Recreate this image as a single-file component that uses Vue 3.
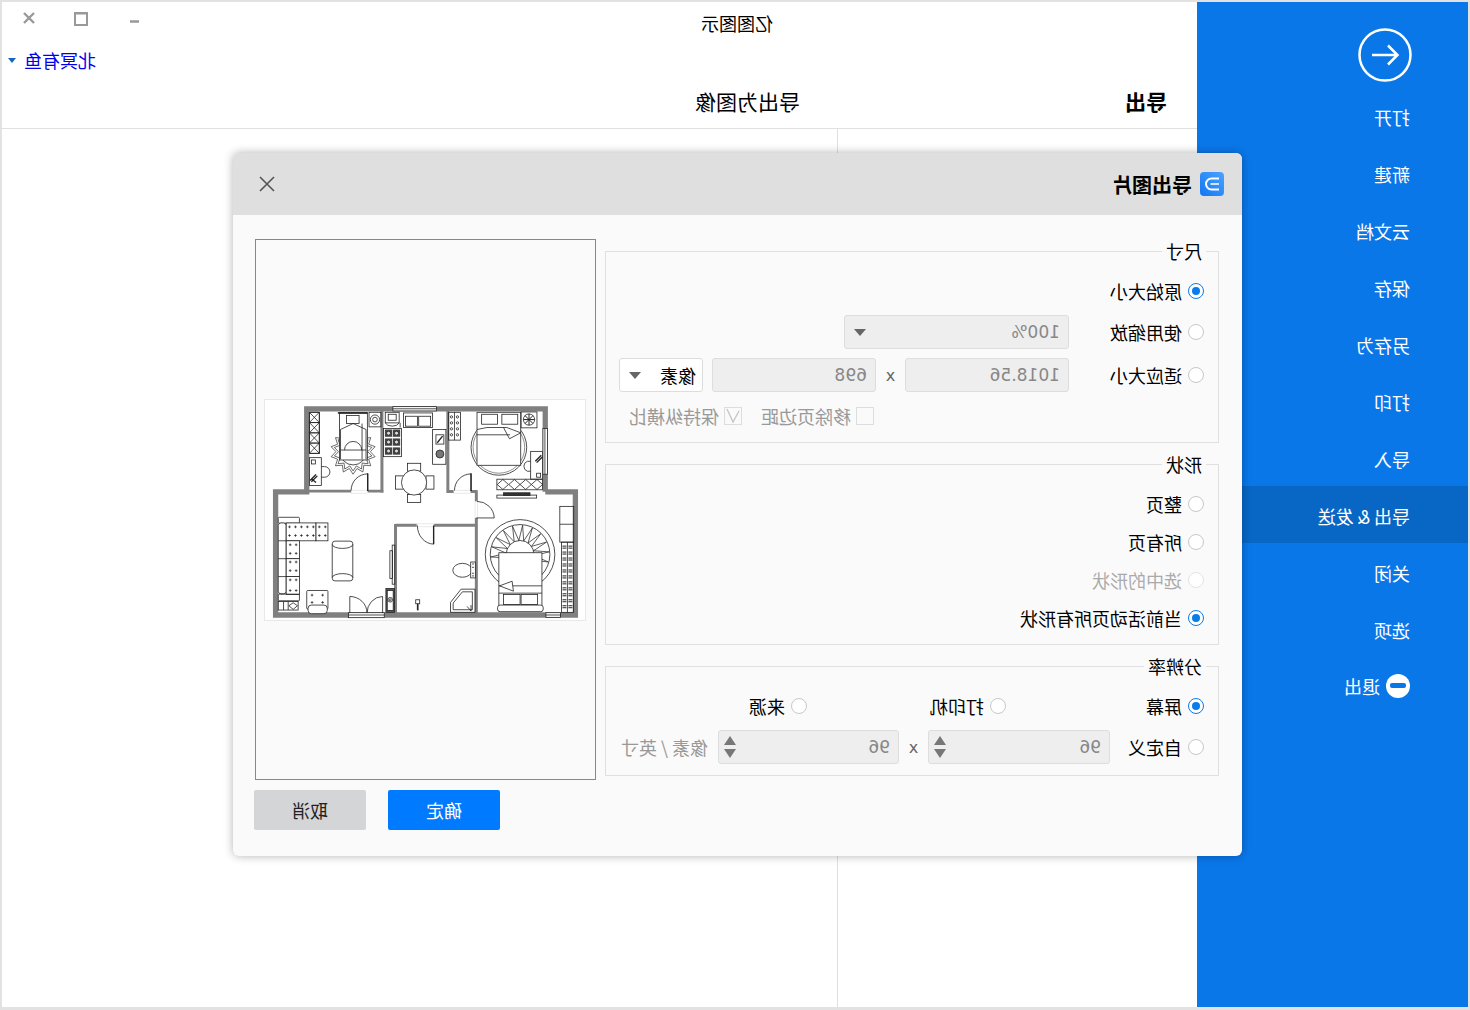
<script setup>
const menu = [
  { label: '打开' }, { label: '新建' }, { label: '云文档' }, { label: '保存' }, { label: '另存为' },
  { label: '打印' }, { label: '导入' }, { label: '导出 & 发送', active: true }, { label: '关闭' }, { label: '选项' },
]
function ring(cx, cy, r1, r2, n, from = 0, to = 360) {
  const pts = []
  for (let i = 0; i <= n * 2; i++) {
    const a = ((from + ((to - from) * i) / (n * 2)) * Math.PI) / 180
    const r = i % 2 ? r2 : r1
    pts.push(`${(cx + r * Math.cos(a)).toFixed(1)},${(cy + r * Math.sin(a)).toFixed(1)}`)
  }
  return pts.join(' ')
}
const rugA = ring(296, 185, 52, 68, 14)
const rugB = ring(296, 185, 44, 58, 14)
const fan = ring(800, 495, 42, 88, 11, 165, 385)
const xCells = [66, 97, 128, 159]
const plus = []
for (const y of [412, 438]) for (const x of [104, 122, 140, 158, 176, 194, 212]) plus.push([x, y])
for (const y of [466, 492, 518, 544, 572, 604]) for (const x of [106, 124]) plus.push([x, y])
for (const y of [618, 640]) for (const x of [172, 204]) plus.push([x, y])
const diamonds = [748, 783, 817, 851]
const burners = [130, 157, 184]
const shelfDots = [80, 98, 116, 134]
const bookRows = [470, 488, 506, 524, 542, 560, 578, 596, 614, 632, 650]
</script>

<template>
  <div class="page">
    <aside class="side">
      <svg class="back" viewBox="0 0 54 54" fill="none" stroke="#fff">
        <circle cx="27" cy="27" r="25.5" stroke-width="2.5" />
        <path d="M40 27H15M24 17.500L14.500 27L24 36.500" stroke-width="2.500" />
      </svg>
      <div v-for="m in menu" :key="m.label" class="item" :class="{ active: m.active }">{{ m.label }}</div>
      <div class="item quit">
        <span class="quit-ico"><i></i></span>
        <span>退出</span>
      </div>
    </aside>

    <main class="main">
      <div class="titlebar">
        <span class="app-title">亿图图示</span>
        <div class="winctl">
          <svg width="12" height="12" viewBox="0 0 12 12"><path d="M0 9.500H9" stroke="#999" stroke-width="2.500" /></svg>
          <svg width="14" height="14" viewBox="0 0 14 14" fill="none"><rect x="1" y="1" width="12" height="12" stroke="#999" stroke-width="2" /><path d="M0 1.500H14" stroke="#999" stroke-width="2" /></svg>
          <svg width="12" height="12" viewBox="0 0 12 12"><path d="M1 1L11 11M11 1L1 11" stroke="#999" stroke-width="2.400" /></svg>
        </div>
      </div>
      <div class="userbar">
        <span class="user">北冥有鱼</span>
        <span class="caret"></span>
      </div>
      <div class="tabs">
        <span class="tab-a">导出</span>
        <span class="tab-b">导出为图像</span>
      </div>
      <div class="panes">
        <div class="pane-l"></div>
        <div class="pane-r"></div>
      </div>
    </main>

    <section class="dialog">
      <header class="dlg-head">
        <svg class="logo flip" viewBox="0 0 24 24">
          <defs>
            <linearGradient id="lg" x1="1" y1="0" x2="0" y2="1">
              <stop offset="0" stop-color="#4aa3ff" />
              <stop offset="1" stop-color="#1277f2" />
            </linearGradient>
          </defs>
          <rect width="24" height="24" rx="4" fill="url(#lg)" />
          <path d="M19 6.500H11.500A5.500 5.500 0 0 0 11.500 17.500H19" fill="none" stroke="#fff" stroke-width="2" />
          <path d="M10.500 12H19" stroke="#cfe4ff" stroke-width="2" />
        </svg>
        <span class="dlg-title">导出图片</span>
        <svg class="dlg-close" width="16" height="16" viewBox="0 0 16 16"><path d="M1 1L15 15M15 1L1 15" stroke="#555" stroke-width="1.600" /></svg>
      </header>

      <div class="dlg-body">
        <div class="forms">
          <fieldset class="group g1">
            <legend>尺寸</legend>
            <div class="row r30"><label class="opt"><span class="radio on"></span>原始大小</label></div>
            <div class="row r34">
              <label class="opt w135"><span class="radio"></span>使用缩放</label>
              <div class="field w225 num">100%<span class="tri"></span></div>
            </div>
            <div class="row r34">
              <label class="opt w135"><span class="radio"></span>适应大小</label>
              <div class="field w164 num">1018.56</div>
              <span class="times">x</span>
              <div class="field w164 num">698</div>
              <div class="field unit">像素<span class="tri"></span></div>
            </div>
            <div class="row r30 checks">
              <span class="chk-wrap"><span class="chk"></span>移除页边距</span>
              <span class="chk-wrap"><span class="chk">
                <svg width="16" height="16" viewBox="0 0 16 16" fill="none"><path d="M2 3L8 14L14 1" stroke="#c4c4c4" stroke-width="1.300" /></svg>
              </span>保持纵横比</span>
            </div>
          </fieldset>

          <fieldset class="group g2">
            <legend>形状</legend>
            <div class="row r30"><label class="opt"><span class="radio"></span>整页</label></div>
            <div class="row r30"><label class="opt"><span class="radio"></span>所有页</label></div>
            <div class="row r30"><label class="opt off"><span class="radio dim"></span>选中的形状</label></div>
            <div class="row r30"><label class="opt"><span class="radio on"></span>当前活动页所有形状</label></div>
          </fieldset>

          <fieldset class="group g3">
            <legend>分辨率</legend>
            <div class="row r30">
              <label class="opt w198"><span class="radio on"></span>屏幕</label>
              <label class="opt w199"><span class="radio"></span>打印机</label>
              <label class="opt"><span class="radio"></span>来源</label>
            </div>
            <div class="row r34">
              <label class="opt w94"><span class="radio"></span>自定义</label>
              <div class="field w182 num">96<span class="spin"><b></b><u></u></span></div>
              <span class="times">x</span>
              <div class="field w181 num">96<span class="spin"><b></b><u></u></span></div>
              <span class="dpi">像素 / 英寸</span>
            </div>
          </fieldset>
        </div>

        <div class="preview">
          <div class="sheet">
            <svg class="plan flip" viewBox="30 30 966 662" fill="none" stroke="#222" stroke-width="2.400">
              <!-- walls -->
              <g stroke="#808080" stroke-width="16">
                <path d="M148 56H884M156 48V306M876 48V306M55 306H164M62 298V686M55 678H975M967 298V686M876 306H975" />
              </g>
              <g stroke="#808080" stroke-width="9">
                <path d="M383 56V309M156 304H290M340 304H388M582 56V310M578 305H600M650 305H672M668 305V335M668 385V678M424 407H488M540 407H668M424 403V678" />
              </g>
              <!-- openings -->
              <g fill="#fff">
                <rect x="416" y="49" width="132" height="13" /><path d="M416 55.500H548" />
                <rect x="282" y="671" width="108" height="15" /><path d="M282 678H390" />
                <rect x="878" y="671" width="44" height="14" /><path d="M878 678H922" />
                <rect x="290" y="301" width="50" height="9" stroke-width="1" stroke="#bbb" />
                <rect x="600" y="301" width="50" height="9" stroke-width="1" stroke="#bbb" />
                <rect x="664" y="335" width="8" height="50" stroke-width="1" stroke="#bbb" />
                <rect x="490" y="403" width="50" height="9" stroke-width="1" stroke="#bbb" />
              </g>

              <!-- doors -->
              <path d="M290 302A50 50 0 0 1 340 252V304" />
              <path d="M340 250V304" stroke-width="4" />
              <path d="M602 302A50 50 0 0 1 652 252V304" />
              <path d="M652 250V304" stroke-width="4" />
              <path d="M670 335A52 52 0 0 1 722 385H668" />
              <path d="M490 408A50 56 0 0 0 539 464V408" />
              <path d="M539 408V464" stroke-width="4" />
              <path d="M286 622V672M286 622A52 50 0 0 1 338 672A48 50 0 0 1 385 622V672" />

              <!-- upper-left bedroom -->
              <rect x="164" y="66" width="30" height="124" />
              <g v-for="y in xCells" :key="'x' + y">
                <path :d="`M164 ${y}H194V${y + 31}H164ZM164 ${y}L194 ${y + 31}M194 ${y}L164 ${y + 31}`" />
              </g>
              <polygon :points="rugA" stroke-width="2" />
              <polygon :points="rugB" stroke-width="2" />
              <circle cx="296" cy="185" r="40" />
              <rect x="255" y="68" width="84" height="142" fill="#fff" />
              <path d="M250 68H340" stroke-width="5" />
              <rect x="276" y="76" width="38" height="24" />
              <path d="M258 118L296 100L335 118V208M258 118V208M258 180H335M270 180A26 26 0 0 1 322 180M323 100V208" />
              <rect x="344" y="66" width="36" height="44" />
              <circle cx="362" cy="88" r="14" />
              <circle cx="362" cy="88" r="7" />
              <rect x="164" y="203" width="36" height="84" />
              <rect x="170" y="210" width="12" height="12" />
              <path d="M200 230H210A15 15 0 0 1 210 262H200" />
              <path d="M166 272L184 254M170 276L188 258M172 268L184 278" stroke-width="4" />

              <!-- kitchen -->
              <rect x="393" y="66" width="42" height="32" />
              <rect x="402" y="72" width="24" height="18" />
              <path d="M393 98A22 14 0 0 0 435 98M438 98V112" />
              <rect x="448" y="68" width="88" height="44" />
              <rect x="454" y="78" width="36" height="30" />
              <rect x="494" y="78" width="36" height="30" />
              <rect x="388" y="115" width="54" height="85" />
              <g v-for="y in burners" :key="'b' + y">
                <rect x="392" :y="y - 12" width="22" height="22" fill="#444" stroke="none" />
                <rect x="416" :y="y - 12" width="22" height="22" fill="#444" stroke="none" />
                <circle cx="403" :cy="y - 1" r="6" fill="#ddd" />
                <circle cx="427" :cy="y - 1" r="6" fill="#ddd" />
              </g>
              <rect x="536" y="118" width="40" height="105" />
              <rect x="546" y="134" width="24" height="28" />
              <path d="M550 158L566 138" stroke-width="4" />
              <circle cx="558" cy="192" r="12" fill="#777" />
              <rect x="460" y="220" width="40" height="24" />
              <rect x="460" y="314" width="40" height="24" />
              <rect x="424" y="258" width="24" height="40" />
              <rect x="516" y="258" width="24" height="40" />
              <circle cx="480" cy="278" r="38" fill="#fff" />

              <!-- upper-right bedroom -->
              <rect x="584" y="66" width="36" height="84" />
              <path d="M602 66V150" />
              <g v-for="y in shelfDots" :key="'s' + y">
                <circle cx="593" :cy="y" r="3.500" /><circle cx="611" :cy="y" r="3.500" />
              </g>
              <circle cx="736" cy="172" r="84" />
              <circle cx="736" cy="172" r="78" stroke-width="1.500" />
              <rect x="670" y="66" width="132" height="160" fill="#fff" />
              <rect x="684" y="72" width="48" height="30" />
              <rect x="745" y="72" width="48" height="30" />
              <path d="M670 118L700 112H760L802 128M670 134H770M750 112L768 146L802 128" />
              <rect x="803" y="65" width="48" height="48" />
              <circle cx="827" cy="88" r="17" />
              <path d="M810 88H844M827 71V105M815 76L839 100M839 76L815 100" stroke-width="3" />
              <rect x="869" y="115" width="14" height="138" fill="#fff" />
              <path d="M875 115V253" />
              <path d="M832 214H822A16 16 0 0 0 822 244H832" />
              <rect x="832" y="184" width="36" height="84" fill="#fff" />
              <rect x="850" y="250" width="12" height="12" />
              <path d="M846 214L864 196M850 218L868 200" stroke-width="4" />
              <rect x="730" y="268" width="138" height="32" />
              <g v-for="x in diamonds" :key="'d' + x">
                <path :d="`M${x} 269L${x + 17} 284L${x} 299L${x - 17} 284Z`" />
              </g>
              <rect x="730" y="316" width="120" height="9" />
              <rect x="750" y="309" width="80" height="8" fill="#333" />

              <!-- living room -->
              <rect x="70" y="383" width="64" height="18" rx="3" fill="#fff" />
              <rect x="70" y="400" width="24" height="214" rx="8" fill="#fff" />
              <rect x="94" y="400" width="90" height="54" fill="#fff" />
              <rect x="184" y="400" width="36" height="54" fill="#fff" />
              <rect x="94" y="454" width="40" height="54" fill="#fff" />
              <rect x="94" y="508" width="40" height="54" fill="#fff" />
              <rect x="94" y="562" width="40" height="54" fill="#fff" />
              <path d="M70 454H94M70 508H94M70 562H94" />
              <rect x="70" y="615" width="64" height="20" rx="2" />
              <rect x="70" y="637" width="60" height="26" />
              <path d="M86 637V663M100 637V663M102 650L115 641L128 650L115 661Z" />
              <rect x="156" y="604" width="64" height="56" rx="3" />
              <rect x="160" y="648" width="58" height="26" rx="10" fill="#fff" />
              <g v-for="(p, i) in plus" :key="'p' + i">
                <path :d="`M${p[0] - 4} ${p[1]}H${p[0] + 4}M${p[0]} ${p[1] - 4}V${p[1] + 4}`" stroke-width="2.200" />
              </g>
              <rect x="233" y="455" width="62" height="120" rx="8" />
              <path d="M233 465A31 12 0 0 0 295 465M233 565A31 12 0 0 1 295 565" />
              <rect x="395" y="598" width="26" height="72" fill="#555" />
              <rect x="399" y="604" width="18" height="60" fill="#fff" />
              <circle cx="408" cy="632" r="7" />
              <circle cx="408" cy="632" r="3" />
              <rect x="414" y="467" width="8" height="118" />
              <rect x="407" y="484" width="8" height="84" />

              <!-- bathroom -->
              <ellipse cx="626" cy="543" rx="29" ry="21" />
              <rect x="651" y="518" width="14" height="48" fill="#fff" />
              <path d="M655 524H661M655 534H661M655 552H661M655 560H661" />
              <path d="M590 640L622 600H664V670H590Z" />
              <path d="M598 642L626 608H656V662H598Z" />
              <path d="M640 652L652 666M652 648V666" />
              <rect x="485" y="632" width="12" height="12" />
              <path d="M491 644V664" stroke-width="5" />

              <!-- master bedroom -->
              <circle cx="800" cy="495" r="105" />
              <circle cx="800" cy="495" r="90" />
              <polygon :points="fan" stroke-width="2.200" />
              <circle cx="800" cy="495" r="42" />
              <rect x="736" y="490" width="130" height="176" fill="#fff" />
              <path d="M736 590H866M736 612H866" />
              <path d="M738 590L776 576L780 606Z" fill="#fff" />
              <rect x="750" y="616" width="50" height="30" />
              <rect x="803" y="616" width="50" height="30" />
              <rect x="732" y="648" width="138" height="20" rx="8" fill="#fff" />
              <rect x="920" y="350" width="42" height="108" />
              <path d="M920 404H962" />
              <rect x="925" y="458" width="36" height="212" />
              <path d="M943 458V670" />
              <g v-for="y in bookRows" :key="'k' + y">
                <path :d="`M928 ${y}H940M946 ${y}H958M928 ${y + 6}H940M946 ${y + 6}H958`" stroke-width="3" />
              </g>
            </svg>
          </div>
        </div>
      </div>

      <footer class="dlg-foot">
        <button class="btn primary">确定</button>
        <button class="btn">取消</button>
      </footer>
    </section>
  </div>
</template>

<style>
html, body { margin: 0; background: #fff; }
</style>

<style scoped>
.page {
  position: relative;
  box-sizing: border-box;
  width: 1470px;
  height: 1010px;
  display: flex;
  overflow: hidden;
  transform: scaleX(-1);
  background: #fff;
  border: 2px solid #e2e2e2;
  border-bottom-width: 3px;
  font-family: "Noto Sans CJK SC", "Liberation Sans", sans-serif;
  font-size: 18px;
  color: #000;
}
.flip { transform: scaleX(-1); }

/* sidebar */
.side {
  flex: none;
  width: 271px;
  padding-top: 26px;
  box-sizing: border-box;
  background: #0a77e9;
  color: #fff;
}
.back { display: block; width: 54px; height: 54px; margin: 0 0 5px 56px; }
.item {
  height: 57px;
  padding-left: 58px;
  line-height: 60px;
  white-space: nowrap;
}
.item.active { background: #0866c5; }
.quit { display: flex; align-items: center; gap: 6px; height: 57px; line-height: 24px; }
.quit-ico {
  flex: none;
  width: 24px;
  height: 24px;
  border-radius: 50%;
  background: #fff;
  display: flex;
  align-items: center;
  justify-content: center;
}
.quit-ico i { width: 16px; height: 5px; border-radius: 2px; background: #0a77e9; }

/* main */
.main { flex: 1; display: flex; flex-direction: column; min-width: 0; }
.titlebar { display: flex; height: 44px; }
.app-title { margin: 8px 0 0 424px; line-height: 26px; }
.winctl { margin-left: auto; margin-right: 21px; padding-top: 10px; display: flex; gap: 39px; align-items: flex-start; }
.userbar { display: flex; align-items: center; justify-content: flex-end; height: 28px; padding-right: 6px; gap: 8px; margin-top: 0; }
.user { color: #0000ee; line-height: 28px; }
.caret { width: 0; height: 0; border: 4px solid transparent; border-top: 5px solid #1565c0; border-bottom: 0; }
.tabs { display: flex; height: 55px; border-bottom: 1px solid #e0e0e0; align-items: center; box-sizing: border-box; }
.tab-a { margin-left: 30px; font-size: 21px; font-weight: 700; }
.tab-b { margin-left: 325px; font-size: 21px; }
.panes { flex: 1; display: flex; }
.pane-l { width: 359px; border-right: 1px solid #e0e0e0; }
.pane-r { flex: 1; }

/* dialog */
.dialog {
  position: absolute;
  left: 226px;
  top: 151px;
  width: 1009px;
  height: 703px;
  display: flex;
  flex-direction: column;
  background: #fafafa;
  border-radius: 6px;
  overflow: hidden;
  box-shadow: 0 0 10px rgba(0, 0, 0, 0.3);
}
.dlg-head {
  flex: none;
  display: flex;
  align-items: center;
  height: 62px;
  padding: 0 18px 0 18px;
  background: #dfdfdf;
}
.logo { width: 24px; height: 24px; flex: none; }
.dlg-title { margin-left: 8px; font-size: 20px; font-weight: 700; }
.dlg-close { margin-left: auto; margin-right: 8px; }
.dlg-body { flex: none; display: flex; gap: 9px; padding: 24px 22px 0 23px; height: 541px; }
.forms { flex: none; width: 614px; display: flex; flex-direction: column; gap: 9px; }

.group {
  margin: 0;
  min-width: 0;
  border: 1px solid #e0e0e0;
  padding: 13px 14px 11px;
}
.group legend {
  margin-left: -2px;
  padding: 0 4px;
  height: 24px;
  line-height: 24px;
  background: #fafafa;
}
.g1 .row + .row, .g3 .row + .row { margin-top: 9px; }
.g2 .row + .row { margin-top: 8px; }

.row { display: flex; align-items: center; }
.r30 { height: 30px; }
.r34 { height: 34px; }

.opt { display: flex; flex: none; align-items: center; gap: 6px; white-space: nowrap; }
.off { color: #aaa; }
.w135 { width: 135px; }
.w94 { width: 94px; }
.w198 { width: 198px; }
.w199 { width: 199px; }

.radio {
  flex: none;
  position: relative;
  box-sizing: border-box;
  width: 16px;
  height: 16px;
  border: 1px solid #c8c8c8;
  border-radius: 50%;
  background: #fff;
}
.radio.on { border-color: #0b7bea; }
.radio.on::after {
  content: "";
  position: absolute;
  inset: 3px;
  border-radius: 50%;
  background: #0b7bea;
}
.radio.dim { border-color: #e4e4e4; }

.field {
  position: relative;
  flex: none;
  box-sizing: border-box;
  height: 34px;
  padding-left: 8px;
  line-height: 32px;
  background: #eee;
  border: 1px solid #ddd;
  border-radius: 3px;
  color: #888;
}
.num { font-family: "DejaVu Sans", sans-serif; font-size: 17px; }
.w225 { width: 225px; }
.w164 { width: 164px; }
.w182 { width: 182px; }
.w181 { width: 181px; }
.unit { width: 84px; margin-left: 9px; padding-left: 6px; background: #fff; color: #000; }
.times { flex: none; width: 29px; text-align: center; font-family: "DejaVu Sans", sans-serif; font-size: 16px; color: #666; }
.tri {
  position: absolute;
  right: 9px;
  top: 13px;
  width: 0;
  height: 0;
  border-left: 6px solid transparent;
  border-right: 6px solid transparent;
  border-top: 7px solid #666;
}
.spin { position: absolute; right: 3px; top: 0; bottom: 0; width: 14px; }
.spin b, .spin u {
  position: absolute;
  left: 0;
  width: 0;
  height: 0;
  border-left: 6px solid transparent;
  border-right: 6px solid transparent;
}
.spin b { top: 5px; border-bottom: 9px solid #777; }
.spin u { bottom: 5px; border-top: 9px solid #777; }
.dpi { margin-left: 10px; color: #999; white-space: nowrap; }

.checks { padding-left: 330px; color: #999; }
.chk-wrap { display: flex; align-items: center; gap: 5px; width: 132px; flex: none; white-space: nowrap; }
.chk {
  flex: none;
  box-sizing: border-box;
  display: flex;
  align-items: center;
  justify-content: center;
  width: 18px;
  height: 18px;
  border: 1px solid #ddd;
  background: #fafafa;
}

/* preview */
.preview {
  flex: none;
  box-sizing: border-box;
  width: 341px;
  height: 541px;
  display: flex;
  align-items: center;
  justify-content: center;
  border: 1px solid #888;
}
.sheet {
  box-sizing: border-box;
  width: 322px;
  height: 222px;
  background: #fff;
  border: 1px solid #e8e8e8;
}
.plan { display: block; width: 320px; height: 220px; }

/* footer */
.dlg-foot {
  flex: none;
  display: flex;
  justify-content: flex-end;
  gap: 22px;
  margin-top: 10px;
  padding-right: 21px;
}
.btn {
  width: 112px;
  height: 40px;
  border: 0;
  border-radius: 2px;
  background: #d4d5d7;
  font: inherit;
  color: #222;
}
.btn.primary { background: #007bff; color: #fff; }
</style>
